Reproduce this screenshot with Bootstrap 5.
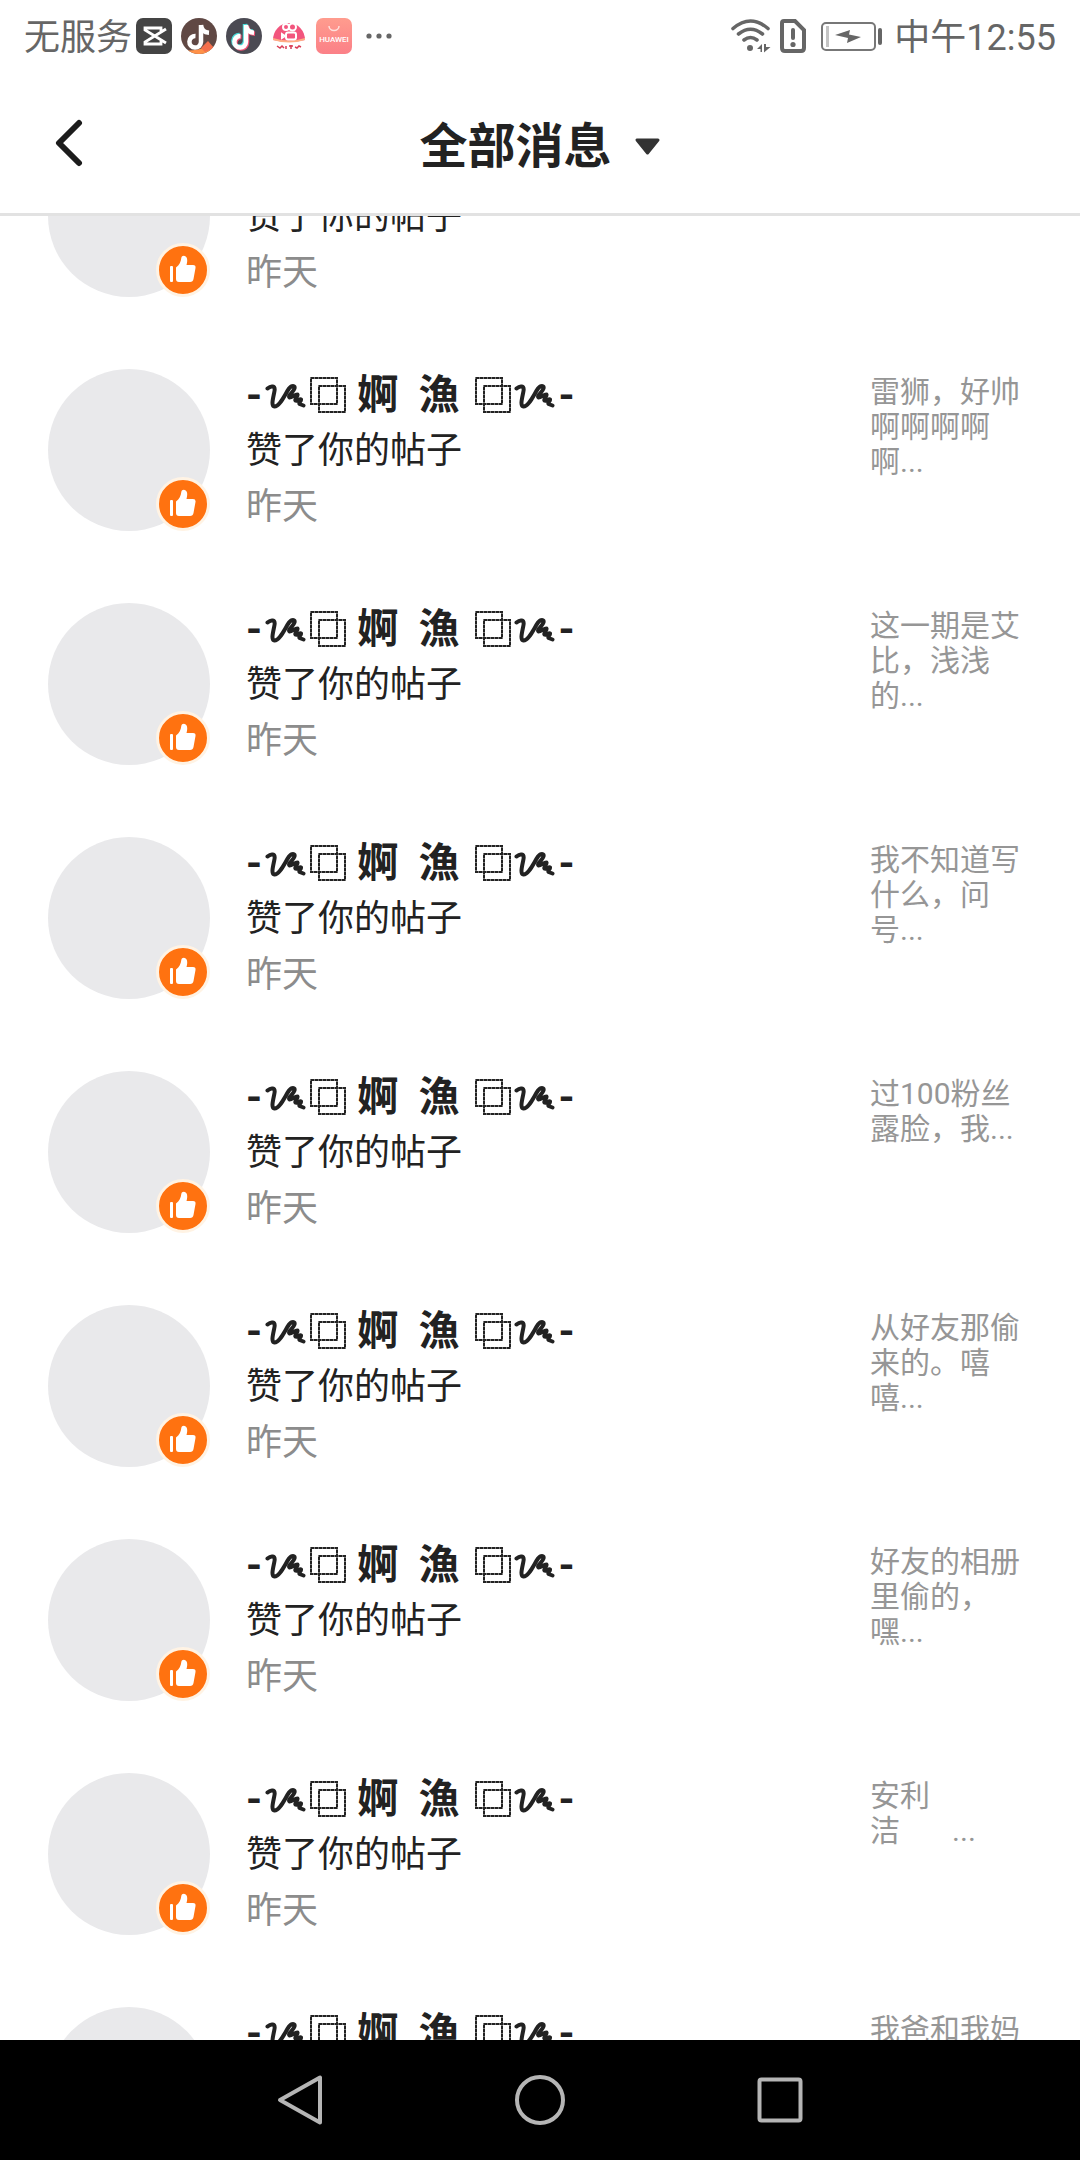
<!DOCTYPE html>
<html lang="zh-CN">
<head>
<meta charset="utf-8">
<meta name="viewport" content="width=device-width, initial-scale=1">
<title>全部消息</title>
<link href="https://cdn.jsdelivr.net/npm/bootstrap@5.3.0/dist/css/bootstrap.min.css" rel="stylesheet">
<style>
  body { font-family: Roboto, "Noto Sans CJK SC", sans-serif; color: #222; background: #fff; }
  svg { display: block; flex: none; }
  .status-bar { height: 72px; padding: 0 24px; font-size: 36px; line-height: 64px; color: #666; }
  .status-label { padding-top: 3px; }
  .status-apps { gap: 9px; margin-left: 4px; }
  .status-dots { margin-left: 7px; }
  .status-battery { margin: 0 11px 0 14px; }
  .title-bar { height: 144px; border-bottom: 3px solid #e2e2e2; }
  .title-bar .btn { color: #222; border: 0; }
  .back-btn { left: 48px; }
  .title-btn { gap: 22px; font-size: 48px; line-height: 64px; font-weight: 700; }
  .title-bar .title-btn { padding: 8px 0 0; }
  .feed-inner { margin-top: -114px; }
  .feed-row { padding: 29px 54px 35px 48px; }
  .feed-row a { color: inherit; }
  .avatar { width: 162px; height: 162px; background: #e9e9eb; }
  .like-badge { right: 0; bottom: 0; width: 54px; height: 54px; background: #ff7210; border: 3px solid #fff3e4; }
  .feed-text { margin-left: 36px; padding-top: 2px; font-size: 36px; line-height: 56px; }
  .feed-name { height: 56px; font-size: 41px; font-weight: 700; gap: 3px; }
  .name-han { margin: 0 12px 0 8px; white-space: pre; }
  .feed-time { color: #8c8c8c; }
  .feed-note { width: 156px; padding-top: 9px; font-size: 30px; line-height: 35px; color: #969696; white-space: nowrap; }
  .nav-keys { height: 120px; background: #000; }
  .nav-keys .btn { width: 22.222%; border: 0; }
</style>
<script src="https://cdn.jsdelivr.net/npm/bootstrap@5.3.0/dist/js/bootstrap.bundle.min.js"></script>
</head>
<body class="vh-100 d-flex flex-column overflow-hidden">

<svg width="0" height="0" class="position-absolute" aria-hidden="true">
  <symbol id="thumb" viewBox="0 0 48 48">
    <rect x="11" y="20" width="3" height="16" rx="1" fill="#fff"/>
    <path d="M17 21.500 C20.500 19 21.800 16 22.300 12 C22.700 9 27 9 28 12.500 C28.500 15 28 17 27.500 19 H34 Q37 19 36.500 22 L34.500 33 Q34 36 31 36 H20 Q17 36 17 33 Z" fill="#fff"/>
  </symbol>
  <symbol id="swirl" viewBox="0 0 42 36">
    <path d="M2.500 11.500 C6 8.500 10.500 8.500 9.500 14 C8.500 20 5.500 29 9.500 29.500 C15 29.500 20 17 24 11.500 C26.500 8 30.500 8 29.500 11.500 C28.500 15 22.500 19 24.500 20.500 C26.500 21 31 16.500 32.500 17.500 C33.500 19 29 22 30.500 23.500 C32 24.500 35 21.500 36 22.500 C36.500 24 33.500 25.500 34.500 27 L38.500 28.500" fill="none" stroke="#222" stroke-width="4" stroke-linecap="round" stroke-linejoin="round"/>
  </symbol>
  <symbol id="squares" viewBox="0 0 36 36">
    <g fill="none" stroke="#222" stroke-width="2"><path d="M1 1H27V27H1Z M9 9H35V35H9Z" stroke="#777"/><path d="M1 1H27V27H1Z M9 9H35V35H9Z" stroke-dasharray="3 1"/></g>
  </symbol>
  <symbol id="note" viewBox="0 0 36 36">
    <path d="M20 7 V24 A5.800 5.800 0 1 1 14.500 18 M20 7 C20.500 12 23.500 14.500 28 14.800" fill="none" stroke-width="4.500"/>
  </symbol>
</svg>

<div class="status-bar d-flex align-items-center flex-shrink-0">
  <span class="status-label">无服务</span>
  <div class="status-apps d-flex">
    <svg width="36" height="36" viewBox="0 0 36 36"><rect width="36" height="36" rx="7" fill="#444"/><path d="M30 11 L9 24 V26 H25 V23 M30 25 L9 12 V10 H25 V13" fill="none" stroke="#fff" stroke-width="2.800"/></svg>
    <svg width="36" height="36" viewBox="0 0 36 36"><clipPath id="round"><circle cx="18" cy="18" r="18"/></clipPath><g clip-path="url(#round)"><rect width="36" height="36" fill="#604844"/><path d="M0 32 Q14 34 27 28 L36 34 V36 H0Z" fill="#ff9148"/><path d="M20 30 L27 23 L33 30 L24 34Z" fill="#f46f4c"/></g><use href="#note" stroke="#fff"/></svg>
    <svg width="36" height="36" viewBox="0 0 36 36"><circle cx="18" cy="18" r="18" fill="#4b4a53"/><use href="#note" x="-1" y="-1" stroke="#49dcda"/><use href="#note" x="1" y="1" stroke="#f05476"/><use href="#note" stroke="#fff"/></svg>
    <svg width="36" height="36" viewBox="0 0 36 36"><path d="M2 22 A16 17 0 1 1 34 22 Q18 26 2 22Z" fill="#f2557d"/><path d="M2 20 Q18 25 34 20 L34 22 Q18 27 2 22Z" fill="#ffad84"/><g fill="none" stroke="#fff" stroke-width="2"><circle cx="15" cy="9" r="3"/><circle cx="21.500" cy="9" r="3.500"/><rect x="15" y="14.500" width="10" height="7" rx="2"/><path d="M11 16 L14 18 L11 20Z"/></g><path d="M6 28 L9 30 L11 28 L13 30 M15 28 V31 M18 28 H22 M20 27 V31 M24 29 L26 30 L28 28 L30 29" fill="none" stroke="#d83d55" stroke-width="1.500"/></svg>
    <svg width="36" height="36" viewBox="0 0 36 36"><defs><linearGradient id="coral" x2="0" y2="1"><stop stop-color="#ff9c8e"/><stop offset="1" stop-color="#fb8087"/></linearGradient></defs><rect width="36" height="36" rx="7" fill="url(#coral)"/><path d="M13 8 A5 4.500 0 0 0 23 8" fill="none" stroke="#ffe0dc" stroke-width="1.500"/><text x="18" y="24" text-anchor="middle" font-family="Roboto" font-size="8" font-weight="500" fill="#fff">HUAWEI</text></svg>
  </div>
  <svg class="status-dots" width="40" height="36" viewBox="0 0 40 36" fill="#666"><circle cx="10" cy="18" r="2.600"/><circle cx="20" cy="18" r="2.600"/><circle cx="30" cy="18" r="2.600"/></svg>

  <div class="ms-auto d-flex align-items-center">
    <svg width="40" height="36" viewBox="0 0 40 36" fill="none" stroke="#666" stroke-width="3.600" stroke-linecap="round"><path d="M2 10.500 Q19.500 -4.500 37 10.500 M7.500 16 Q19.500 6.500 31.500 16 M13 22 Q19.500 17 26 22"/><circle cx="19" cy="30" r="3" fill="#666" stroke="none"/><path d="M26 31 L31 26 V34 H29.500 V31Z M33 26 H35 V29 H39.500 L33 34.500Z" fill="#666" stroke="none"/></svg>
    <svg class="ms-2" width="28" height="36" viewBox="0 0 28 36" fill="none" stroke="#666" stroke-width="4"><path d="M5 3 H16 L25 12 V30 Q25 33 22 33 H6 Q3 33 3 30 V5 Q3 3 5 3Z"/><path d="M14 12 V20" stroke-linecap="round"/><circle cx="14" cy="26.500" r="2.600" fill="#666" stroke="none"/></svg>
    <svg class="status-battery" width="62" height="36" viewBox="0 0 62 36" fill="none"><rect x="1" y="5" width="53" height="27" rx="4" stroke="#777" stroke-width="2"/><path d="M6.500 8 V29" stroke="#c4c4c4" stroke-width="3"/><path d="M14 17 L29 12 L28 16.500 L40 19 L26 25 L27 20Z" fill="#666"/><rect x="57" y="10" width="4" height="17" rx="2" fill="#666"/></svg>
    <time class="status-label">中午12:55</time>
  </div>
</div>

<header class="title-bar d-flex align-items-center justify-content-center position-relative flex-shrink-0">
  <button class="btn back-btn position-absolute p-0" type="button" aria-label="返回"><svg width="42" height="48" viewBox="0 0 42 48"><path d="M31 4 L11 24 L31 44" fill="none" stroke="#1c1c1c" stroke-width="6" stroke-linecap="round" stroke-linejoin="round"/></svg></button>
  <button class="btn title-btn d-flex align-items-center" type="button">全部消息<svg width="27" height="18" viewBox="0 0 27 18"><path d="M3 2 H24 L13.500 15Z" fill="#333" stroke="#333" stroke-width="3" stroke-linejoin="round"/></svg></button>
</header>

<main class="flex-fill overflow-hidden">
  <ul class="feed-inner list-unstyled mb-0" id="feed"></ul>
</main>

<nav class="nav-keys d-flex justify-content-center flex-shrink-0">
  <button class="btn d-flex align-items-center justify-content-center p-0" type="button" aria-label="返回键"><svg width="52" height="52" viewBox="0 0 52 52"><path d="M46 3.500 V48.500 L6 26Z" fill="none" stroke="#b5b5b5" stroke-width="4" stroke-linejoin="round"/></svg></button>
  <button class="btn d-flex align-items-center justify-content-center p-0" type="button" aria-label="主屏幕"><svg width="52" height="52" viewBox="0 0 52 52"><circle cx="26" cy="26" r="23" fill="none" stroke="#b5b5b5" stroke-width="4"/></svg></button>
  <button class="btn d-flex align-items-center justify-content-center p-0" type="button" aria-label="最近任务"><svg width="52" height="52" viewBox="0 0 52 52"><rect x="5.500" y="5.500" width="41" height="41" rx="2" fill="none" stroke="#b5b5b5" stroke-width="4"/></svg></button>
</nav>

<script>
  const notes = [
    "",
    "雷狮，好帅<br>啊啊啊啊<br>啊...",
    "这一期是艾<br>比，浅浅<br>的...",
    "我不知道写<br>什么，问<br>号...",
    "过100粉丝<br>露脸，我...",
    "从好友那偷<br>来的。嘻<br>嘻...",
    "好友的相册<br>里偷的，<br>嘿...",
    "安利<br>洁&nbsp;&nbsp;&nbsp;&nbsp;&nbsp;&nbsp;&nbsp;...",
    "我爸和我妈"
  ];
  const swirl = '<svg width="42" height="36"><use href="#swirl"/></svg>';
  const squares = '<svg width="36" height="36"><use href="#squares"/></svg>';
  const name = `<span>-</span>${swirl}${squares}<span class="name-han">婀  漁</span>${squares}${swirl}<span>-</span>`;
  // The first row starts scrolled past its name line, so that line stays blank.
  document.getElementById("feed").innerHTML = notes.map((note, i) => `
    <li class="feed-row d-flex align-items-center">
      <div class="avatar rounded-circle position-relative flex-shrink-0">
        <span class="like-badge rounded-circle position-absolute"><svg width="48" height="48"><use href="#thumb"/></svg></span>
      </div>
      <div class="feed-text flex-fill">
        ${i ? `<a href="#" class="feed-name d-flex align-items-center text-decoration-none">${name}</a>` : '<div class="feed-name"></div>'}
        <div>赞了你的帖子</div>
        <div class="feed-time">昨天</div>
      </div>
      <div class="feed-note align-self-start">${note}</div>
    </li>`).join("");
</script>
</body>
</html>
